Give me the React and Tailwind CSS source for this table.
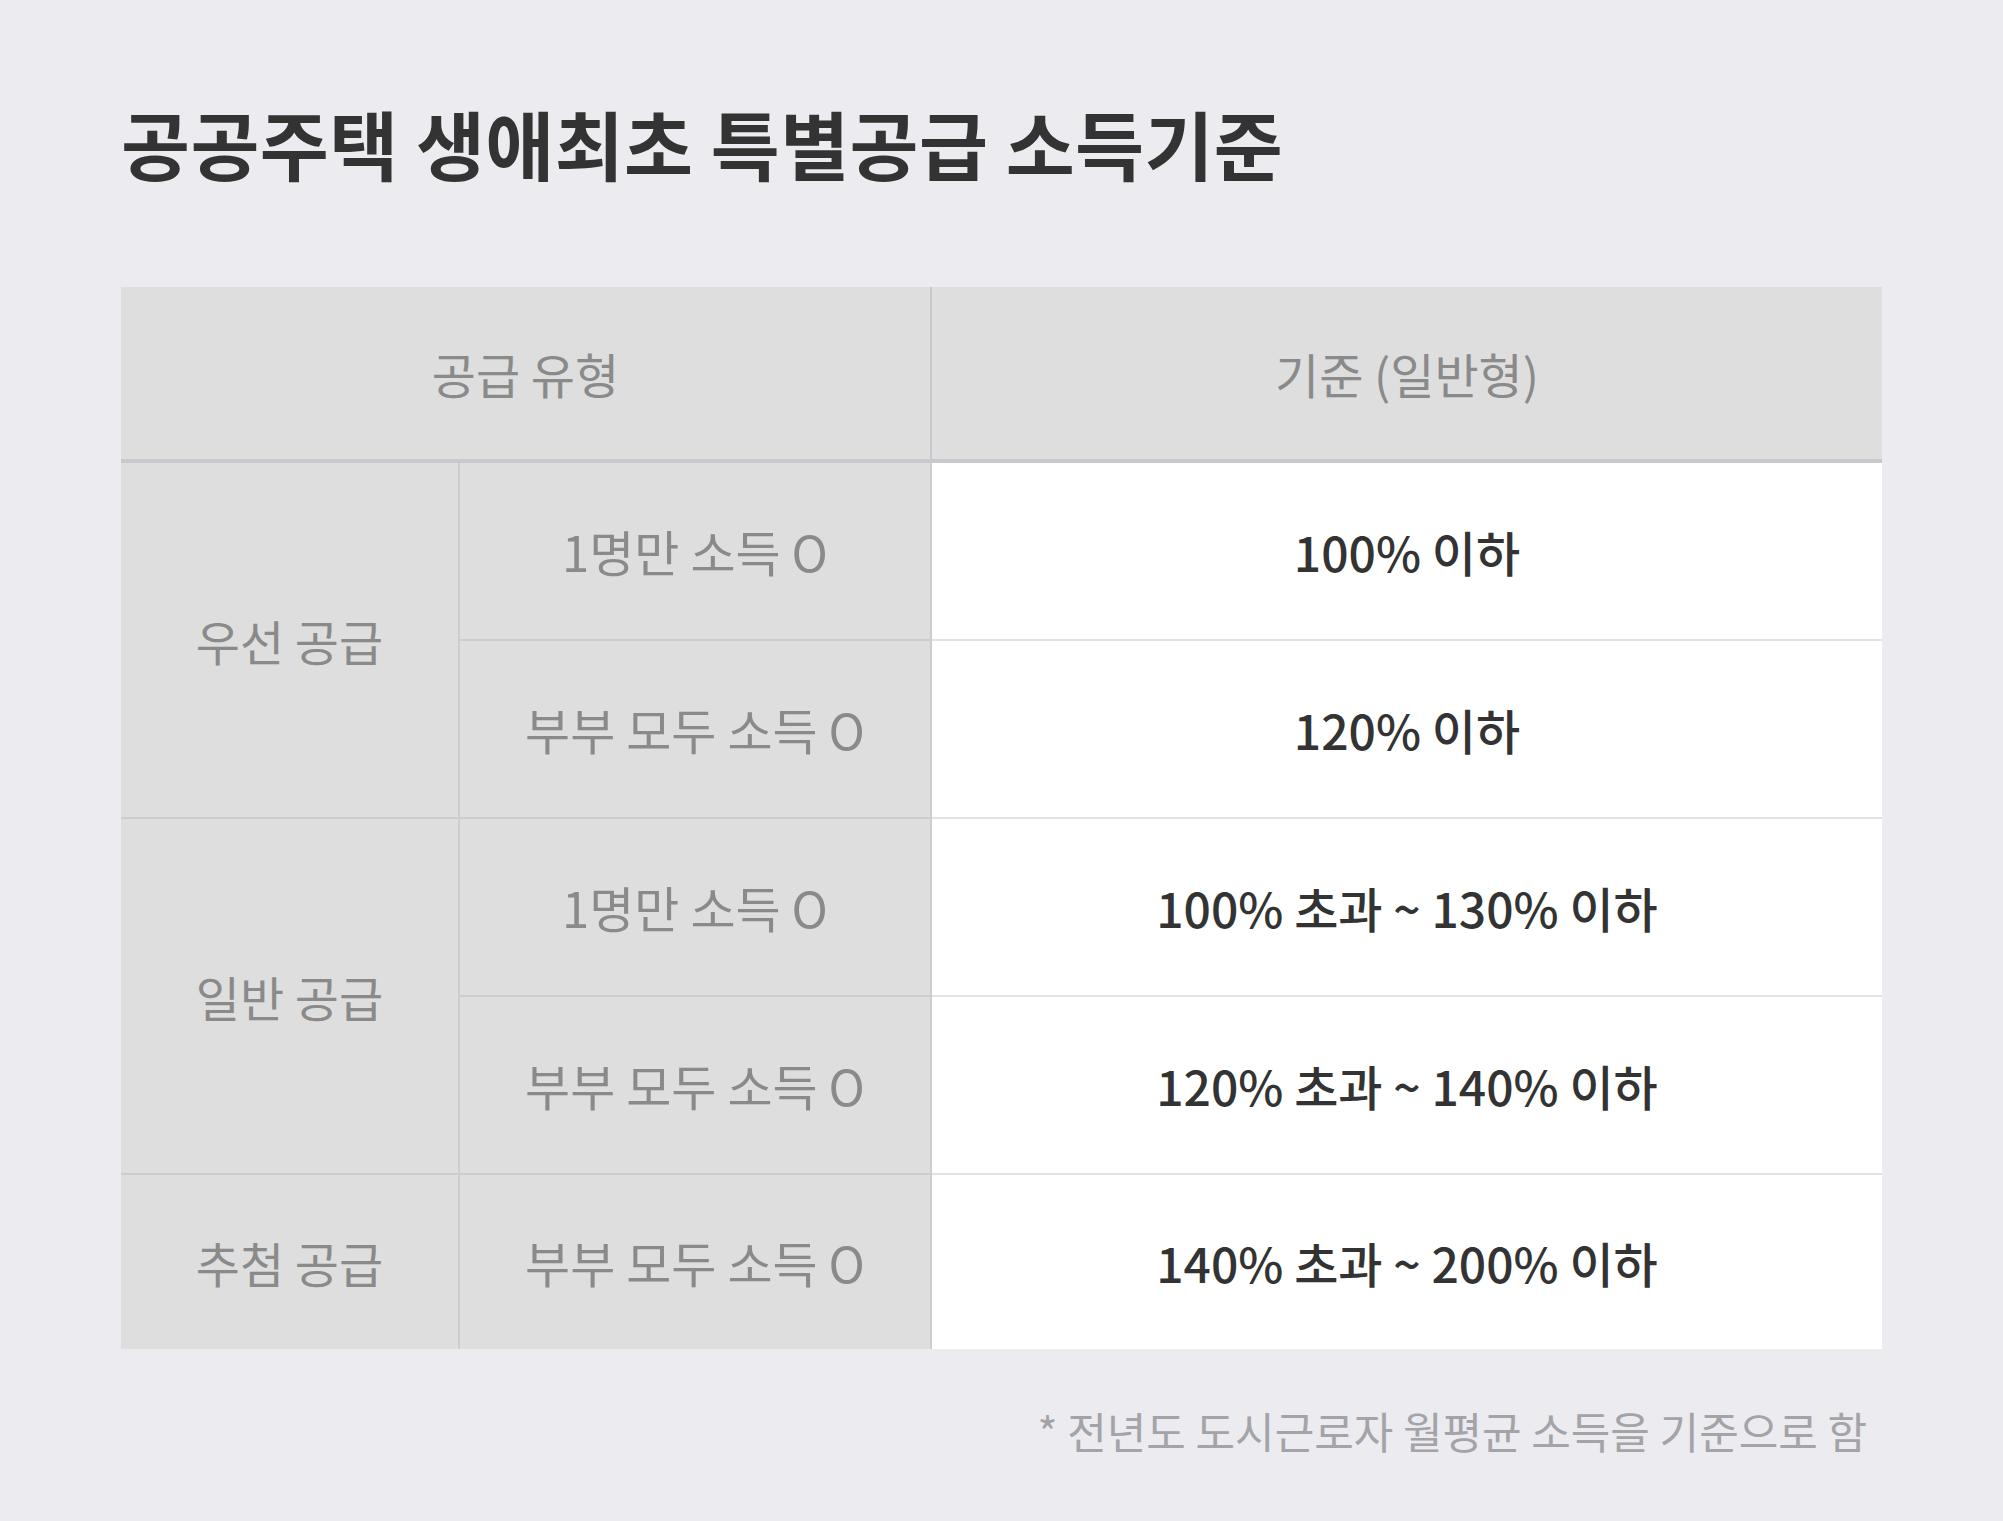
import React from 'react';

const rows = [
  { group: '우선 공급', span: 2, type: '1명만 소득 O', value: '100% 이하' },
  { type: '부부 모두 소득 O', value: '120% 이하' },
  { group: '일반 공급', span: 2, type: '1명만 소득 O', value: '100% 초과 ~ 130% 이하' },
  { type: '부부 모두 소득 O', value: '120% 초과 ~ 140% 이하' },
  { group: '추첨 공급', span: 1, type: '부부 모두 소득 O', value: '140% 초과 ~ 200% 이하', last: true },
];

const font = { fontFamily: '"Noto Sans CJK KR", "Noto Sans", sans-serif' };

const App = () => {
  return (
    <div
      className="flex h-[1521px] w-[2003px] flex-col bg-[#ebebf0] pl-[121px] pt-[105px]"
      style={font}
    >
      <h1 className="text-[75px] font-bold leading-none tracking-[0.005em] text-[#333333]">
        공공주택 생애최초 특별공급 소득기준
      </h1>

      <div className="mt-[107px] grid w-[1761px] grid-cols-[339px_472px_950px] grid-rows-[176px_178px_178px_178px_178px_174px]">
        <div className="col-span-2 flex items-center justify-center border-r-2 border-b-4 border-[#c9c9cd] bg-[#dedede] text-[48px] text-[#8a8a8a]">
          공급 유형
        </div>
        <div className="flex items-center justify-center border-b-4 border-[#c9c9cd] bg-[#dedede] text-[48px] text-[#8a8a8a]">
          기준 (일반형)
        </div>

        {rows.map((row, i) => (
          <React.Fragment key={i}>
            {row.group ? (
              <div
                className={`flex items-center justify-center border-r-2 border-[#cdcdd0] bg-[#dedede] text-[48px] text-[#8a8a8a] ${
                  row.span === 2 ? 'row-span-2' : ''
                } ${row.last ? '' : 'border-b-2'}`}
              >
                {row.group}
              </div>
            ) : null}
            <div
              className={`flex items-center justify-center border-r-2 border-[#cdcdd0] bg-[#dedede] text-[49px] text-[#8a8a8a] ${
                row.last ? '' : 'border-b-2'
              }`}
            >
              {row.type}
            </div>
            <div
              className={`flex items-center justify-center border-[#e2e2e4] bg-white text-[48px] font-medium text-[#333333] ${
                row.last ? '' : 'border-b-2'
              }`}
            >
              {row.value}
            </div>
          </React.Fragment>
        ))}
      </div>

      <p className="mt-[60px] w-[1746px] text-right text-[43px] leading-none text-[#a3a3a8]">
        * 전년도 도시근로자 월평균 소득을 기준으로 함
      </p>
    </div>
  );
};

export default App;
